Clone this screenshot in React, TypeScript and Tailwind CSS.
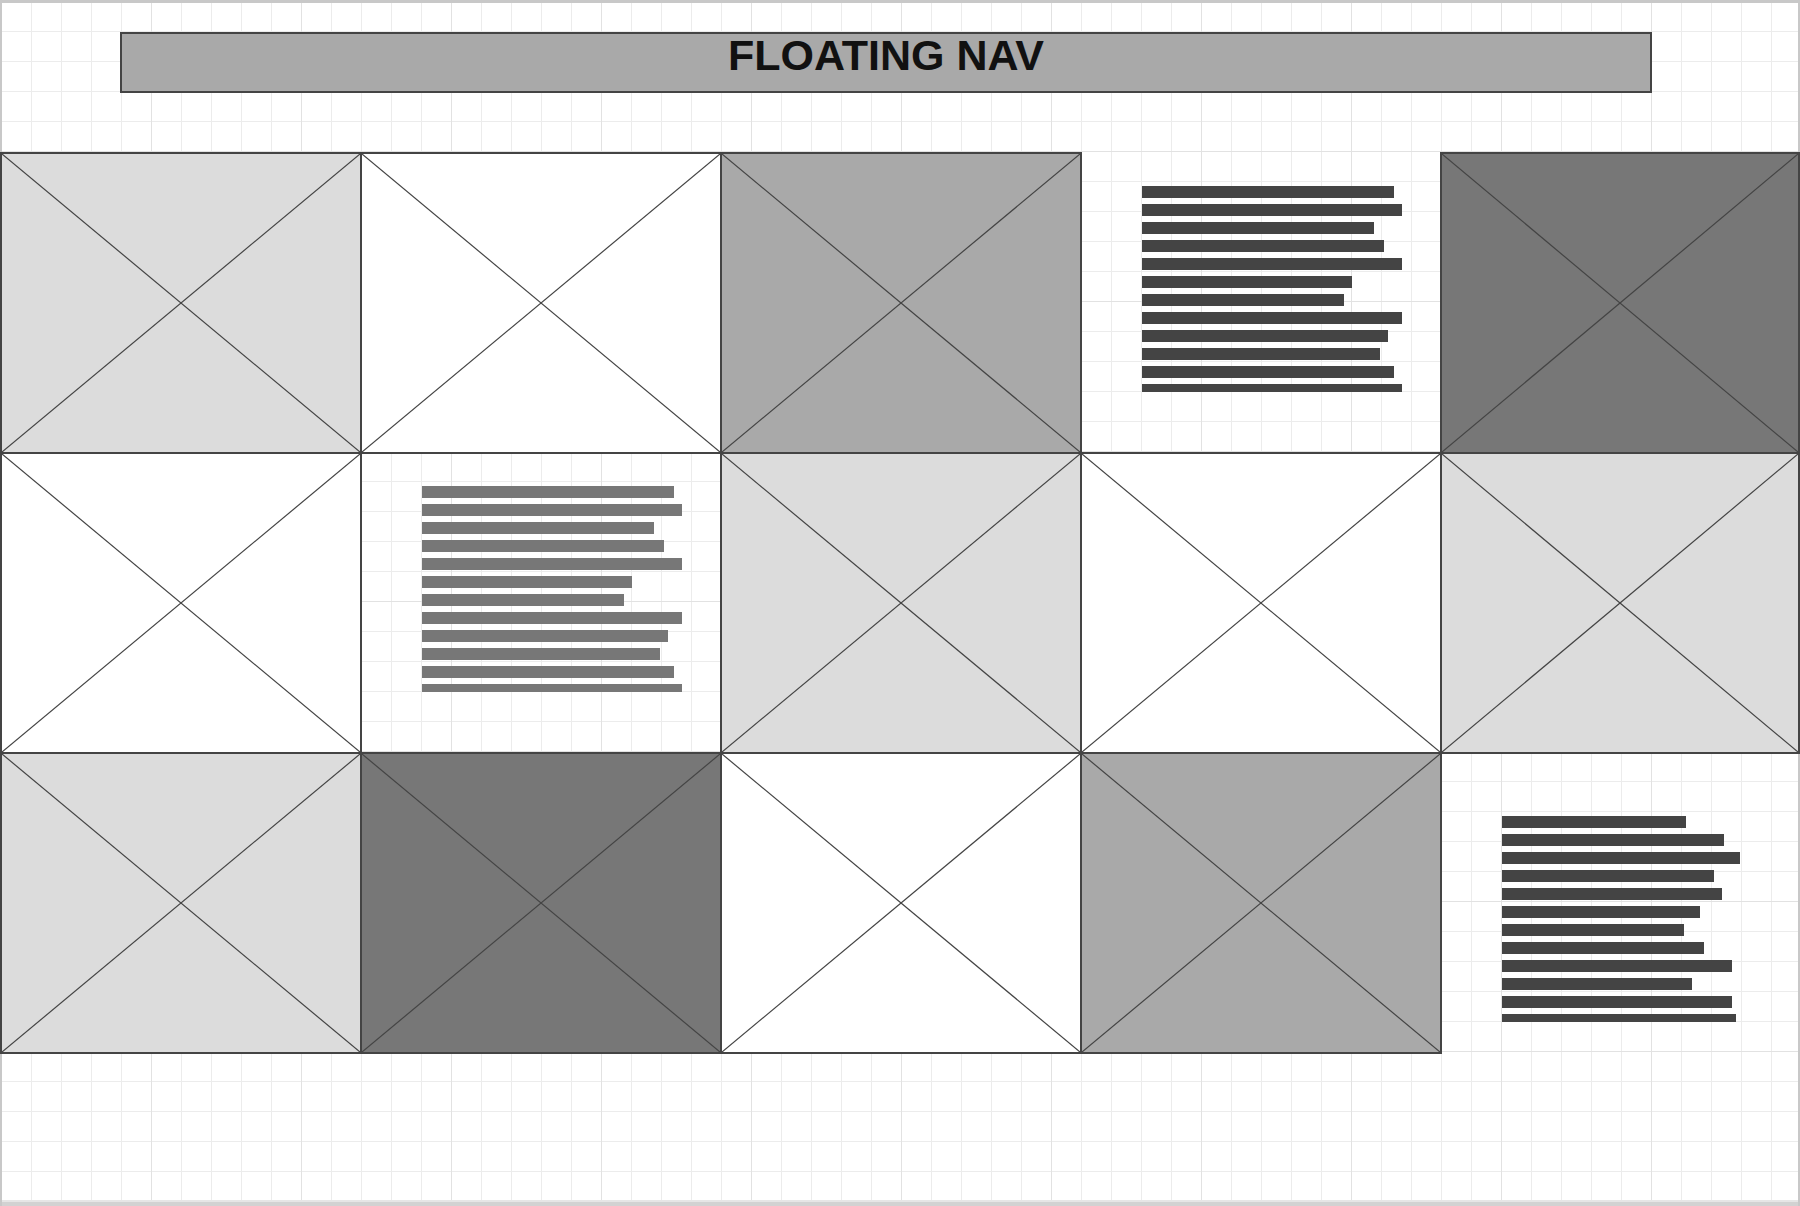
import React from 'react';

type Tile =
  | { kind: 'box'; bg: string }
  | { kind: 'text'; bar: string; pad: string; widths: string[] };

const widthsA = [
  'w-[252px]', 'w-[260px]', 'w-[232px]', 'w-[242px]', 'w-[260px]', 'w-[210px]',
  'w-[202px]', 'w-[260px]', 'w-[246px]', 'w-[238px]', 'w-[252px]', 'w-[260px]',
];

const widthsB = [
  'w-[184px]', 'w-[222px]', 'w-[238px]', 'w-[212px]', 'w-[220px]', 'w-[198px]',
  'w-[182px]', 'w-[202px]', 'w-[230px]', 'w-[190px]', 'w-[230px]', 'w-[234px]',
];

const tiles: Tile[] = [
  // row 1
  { kind: 'box', bg: 'bg-[#dcdcdc]' },
  { kind: 'box', bg: 'bg-white' },
  { kind: 'box', bg: 'bg-[#a9a9a9]' },
  { kind: 'text', bar: 'bg-[#444444]', pad: 'pt-[34px]', widths: widthsA },
  { kind: 'box', bg: 'bg-[#777777]' },
  // row 2
  { kind: 'box', bg: 'bg-white' },
  { kind: 'text', bar: 'bg-[#777777]', pad: 'pt-[34px]', widths: widthsA },
  { kind: 'box', bg: 'bg-[#dcdcdc]' },
  { kind: 'box', bg: 'bg-white' },
  { kind: 'box', bg: 'bg-[#dcdcdc]' },
  // row 3
  { kind: 'box', bg: 'bg-[#dcdcdc]' },
  { kind: 'box', bg: 'bg-[#777777]' },
  { kind: 'box', bg: 'bg-white' },
  { kind: 'box', bg: 'bg-[#a9a9a9]' },
  { kind: 'text', bar: 'bg-[#444444]', pad: 'pt-[64px]', widths: widthsB },
];

function Placeholder({ bg }: { bg: string }) {
  return (
    <div className={`relative w-[calc(100%+2px)] h-[calc(100%+2px)] border-2 border-[#444444] ${bg}`}>
      {/* image placeholder cross */}
      <svg className="absolute inset-0 w-full h-full" viewBox="0 0 100 100" preserveAspectRatio="none">
        <line x1="0" y1="0" x2="100" y2="100" stroke="#444444" strokeWidth="1.2" vectorEffect="non-scaling-stroke" />
        <line x1="100" y1="0" x2="0" y2="100" stroke="#444444" strokeWidth="1.2" vectorEffect="non-scaling-stroke" />
      </svg>
    </div>
  );
}

function TextBlock({ bar, pad, widths }: { bar: string; pad: string; widths: string[] }) {
  return (
    <div className={`w-[calc(100%+2px)] h-[calc(100%+2px)] pl-[62px] ${pad}`}>
      <div className="h-[206px] overflow-hidden flex flex-col gap-[6px]">
        {widths.map((w, i) => (
          <div key={i} className={`h-3 shrink-0 ${w} ${bar}`} />
        ))}
      </div>
    </div>
  );
}

export default function App() {
  return (
    <div
      className="w-[1800px] h-[1206px] overflow-hidden pt-[32px] bg-white
        bg-[linear-gradient(to_right,#e2e2e2_1px,transparent_1px),linear-gradient(to_bottom,#e2e2e2_1px,transparent_1px),linear-gradient(to_right,#ececec_1px,transparent_1px),linear-gradient(to_bottom,#ececec_1px,transparent_1px)]
        [background-size:150px_150px,150px_150px,30px_30px,30px_30px]
        [background-position:1px_1px]
        shadow-[inset_0_3px_0_#c8c8c8,inset_2px_0_0_#c8c8c8,inset_-2px_0_0_#c8c8c8,inset_0_-4px_0_#d2d2d2,inset_0_-6px_0_#e6e6e6]"
    >
      {/* Nav */}
      <div className="ml-[120px] w-[1532px] h-[61px] border-2 border-[#444444] bg-[#a9a9a9] flex justify-center">
        <span className="font-['Liberation_Sans',Arial,sans-serif] font-bold text-[43px] leading-none text-[#111111]">
          FLOATING NAV
        </span>
      </div>

      {/* Tiles */}
      <div className="mt-[59px] grid grid-cols-[360px_360px_360px_360px_358px] grid-rows-[300px_300px_300px]">
        {tiles.map((t, i) => (
          <div key={i} className="min-w-0">
            {t.kind === 'box' ? (
              <Placeholder bg={t.bg} />
            ) : (
              <TextBlock bar={t.bar} pad={t.pad} widths={t.widths} />
            )}
          </div>
        ))}
      </div>
    </div>
  );
}
